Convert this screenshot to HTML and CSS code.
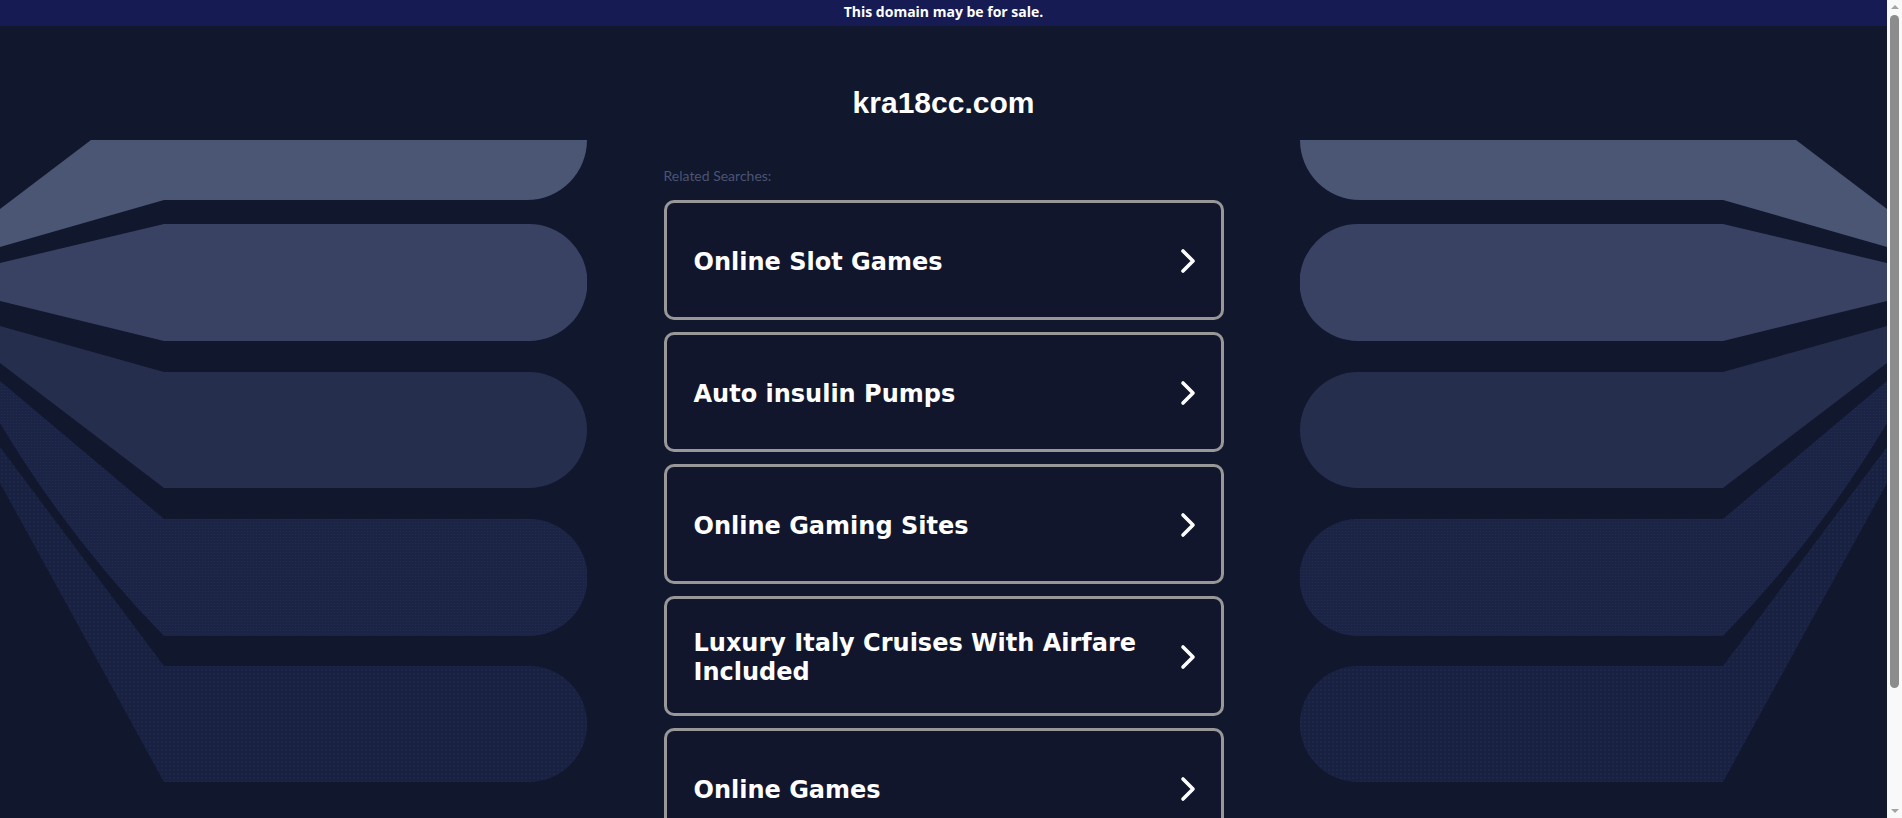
FILE: index.html
```html
<!DOCTYPE html>
<html lang="en">
<head>
<meta charset="utf-8">
<title>kra18cc.com</title>
<link rel="stylesheet" href="styles.css">
</head>
<body>
<svg class="defs" width="0" height="0" aria-hidden="true">
  <defs>
    <pattern id="dotsA" width="3" height="3" patternUnits="userSpaceOnUse">
      <rect width="3" height="3" fill="#1c2445"/>
      <circle cx="1.5" cy="1.5" r="0.6" fill="#232d55"/>
    </pattern>
    <pattern id="dotsB" width="4" height="4" patternUnits="userSpaceOnUse">
      <rect width="4" height="4" fill="#192141"/>
      <circle cx="2" cy="2" r="0.7" fill="#25305c"/>
    </pattern>
    <symbol id="art" viewBox="0 0 587 650">
      <path d="M91,0 H587 A60,60 0 0 1 527,60 H164 L0,107 V69 Z" fill="#4b5574"/>
      <path d="M164,84 H529 A58.5,58.5 0 0 1 529,201 H164 L0,161 V123 Z" fill="#394263"/>
      <path d="M164,232 H529 A58,58 0 0 1 529,348 H164 L0,223 V186 Z" fill="#252e4d"/>
      <path d="M164,379 H529 A58.5,58.5 0 0 1 529,496 H164 Q70,400 0,283 V241 Z" fill="url(#dotsA)"/>
      <path d="M164,526 H529 A58,58 0 0 1 529,642 H164 Q70,470 0,343 V307 Z" fill="url(#dotsB)"/>
    </symbol>
  </defs>
</svg>

<div class="page">
  <div class="topbar">This domain may be for sale.</div>

  <h1 class="domain">kra18cc.com</h1>

  <main class="layout">
    <div class="side side-left">
      <svg class="art" viewBox="0 0 587 650"><use href="#art"/></svg>
    </div>

    <section class="center">
      <p class="related">Related Searches:</p>
      <ul class="list">
        <li><a class="card" href="#"><span class="label">Online Slot Games</span><svg class="chev" viewBox="0 0 18 26"><polyline points="4,3 14,13 4,23"/></svg></a></li>
        <li><a class="card" href="#"><span class="label">Auto insulin Pumps</span><svg class="chev" viewBox="0 0 18 26"><polyline points="4,3 14,13 4,23"/></svg></a></li>
        <li><a class="card" href="#"><span class="label">Online Gaming Sites</span><svg class="chev" viewBox="0 0 18 26"><polyline points="4,3 14,13 4,23"/></svg></a></li>
        <li><a class="card" href="#"><span class="label">Luxury Italy Cruises With Airfare Included</span><svg class="chev" viewBox="0 0 18 26"><polyline points="4,3 14,13 4,23"/></svg></a></li>
        <li><a class="card" href="#"><span class="label">Online Games</span><svg class="chev" viewBox="0 0 18 26"><polyline points="4,3 14,13 4,23"/></svg></a></li>
      </ul>
    </section>

    <div class="side side-right">
      <svg class="art mirror" viewBox="0 0 587 650"><use href="#art"/></svg>
    </div>
  </main>
</div>

<div class="scrollbar" aria-hidden="true">
  <span class="sb-arrow sb-up"></span>
  <span class="sb-thumb"></span>
  <span class="sb-arrow sb-down"></span>
</div>
</body>
</html>
```

FILE: styles.css
```css
* {
  box-sizing: border-box;
}

html, body {
  margin: 0;
  padding: 0;
}

body {
  background: #11172c;
  color: #ffffff;
  font-family: "Liberation Sans", Arial, sans-serif;
}

.defs {
  position: absolute;
  width: 0;
  height: 0;
  overflow: hidden;
}

.page {
  margin-right: 15px;
}

.topbar {
  height: 26px;
  line-height: 24px;
  background: #171b54;
  color: #ffffff;
  text-align: center;
  font-family: "Open Sans", Lato, sans-serif;
  font-weight: 700;
  font-size: 14px;
}

.domain {
  margin: 59px 0 0;
  font-family: "Liberation Sans", Arial, sans-serif;
  font-weight: 700;
  font-size: 30px;
  line-height: 36px;
  text-align: center;
  color: #ffffff;
}

.layout {
  display: flex;
  align-items: flex-start;
  margin-top: 19px;
}

.side {
  flex: 1 1 0;
  min-width: 0;
  display: flex;
  overflow: hidden;
}

.side-left {
  justify-content: flex-start;
}

.side-right {
  justify-content: flex-end;
}

.art {
  display: block;
  flex: 0 0 587px;
  width: 587px;
  height: 650px;
}

.mirror {
  transform: scaleX(-1);
}

.center {
  flex: 0 0 712px;
  width: 712px;
  padding: 28px 76px 100px;
}

.related {
  margin: 0 0 16px;
  font-family: Lato, "Liberation Sans", sans-serif;
  font-size: 14px;
  line-height: 16px;
  color: #4a5476;
}

.list {
  list-style: none;
  margin: 0;
  padding: 0;
  display: flex;
  flex-direction: column;
  gap: 12px;
}

.card {
  display: flex;
  align-items: center;
  height: 120px;
  padding: 4px 24px 0 27px;
  border: 3px solid #989898;
  border-radius: 10px;
  background: #11162d;
  color: #ffffff;
  text-decoration: none;
}

.label {
  flex: 1 1 auto;
  min-width: 0;
  font-family: "DejaVu Sans", Verdana, sans-serif;
  font-weight: 700;
  font-size: 24px;
  line-height: 29px;
}

.chev {
  flex: 0 0 18px;
  width: 18px;
  height: 26px;
  margin-left: 20px;
  margin-bottom: 2px;
}

.chev polyline {
  fill: none;
  stroke: #ffffff;
  stroke-width: 3.6;
  stroke-linecap: round;
  stroke-linejoin: round;
}

/* imitation of the browser's vertical scrollbar seen in the reference */
.scrollbar {
  position: fixed;
  top: 0;
  right: 0;
  width: 15px;
  height: 100%;
  background: #f9f9f9;
  display: flex;
  flex-direction: column;
  align-items: center;
}

.sb-arrow {
  width: 0;
  height: 0;
  margin-top: 5px;
  border-left: 4px solid transparent;
  border-right: 4px solid transparent;
  flex: none;
}

.sb-up {
  border-bottom: 4px solid #a3a3a3;
}

.sb-down {
  margin-top: auto;
  margin-bottom: 5px;
  border-top: 4px solid #a3a3a3;
}

.sb-thumb {
  margin-top: 6px;
  width: 9px;
  height: 673px;
  border-radius: 5px;
  background: #8c8c8c;
}
```
